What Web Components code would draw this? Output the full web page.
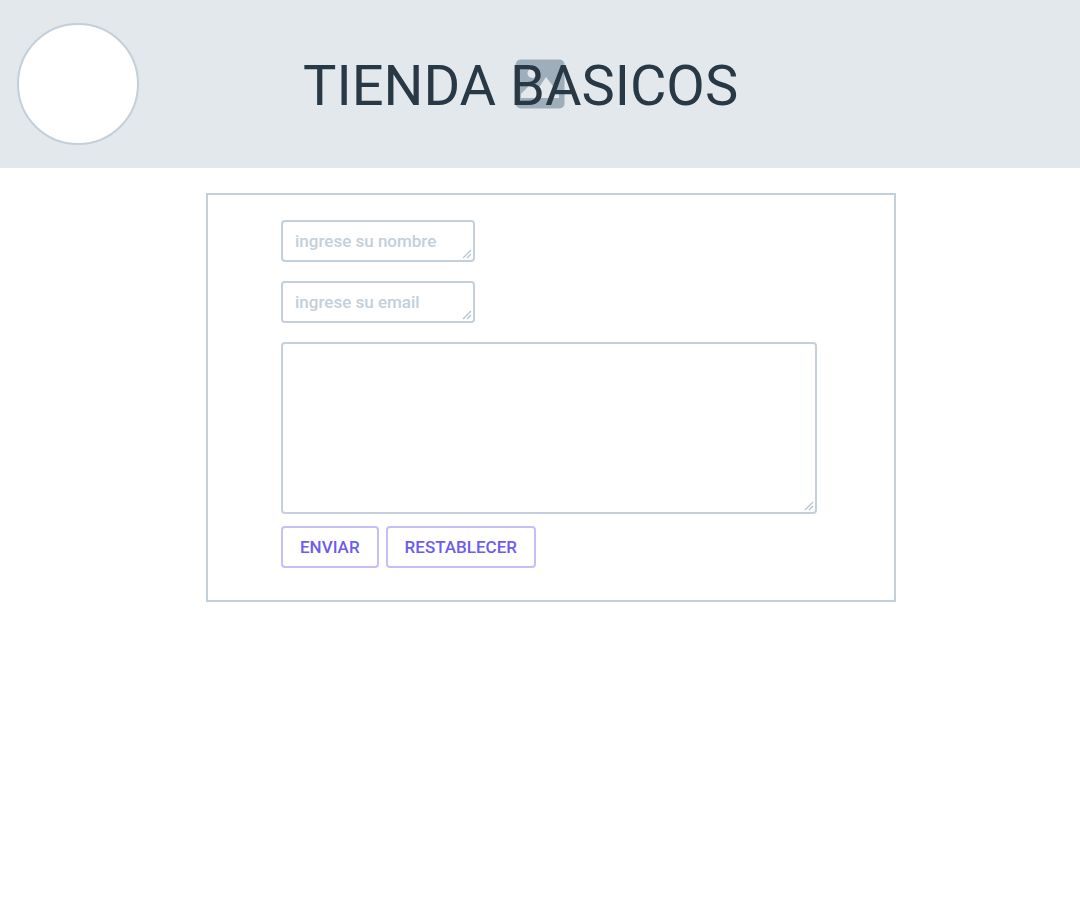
<!DOCTYPE html>
<html lang="es">
<head>
<meta charset="utf-8">
<meta name="viewport" content="width=device-width, initial-scale=1">
<title>Tienda Basicos</title>
<style>
  body {
    --line: #c3cfd9;
    --ink: #293845;
    --accent: #6c5cf0;
    --accent-line: #c4befa;
    margin: 0;
    background: #fff;
    color: var(--ink);
    font-family: Roboto, "Liberation Sans", sans-serif;
  }
</style>
</head>
<body>
<store-header>Tienda Basicos</store-header>
<contact-panel>
  <text-field name="nombre" placeholder="ingrese su nombre"></text-field>
  <text-field name="email" placeholder="ingrese su email"></text-field>
  <text-field name="mensaje" label="mensaje" multiline></text-field>
  <action-button slot="actions">Enviar</action-button>
  <action-button slot="actions">Restablecer</action-button>
</contact-panel>
<script>
  class StoreHeader extends HTMLElement {
    constructor() {
      super();
      this.attachShadow({ mode: 'open' }).innerHTML = `
        <style>
          :host { display: block; }
          header {
            position: relative;
            display: flex;
            align-items: center;
            gap: 164px;
            min-height: 168px;
            padding: 0 17px;
            box-sizing: border-box;
            background: #e2e8ec;
          }
          .logo {
            flex: none;
            width: 122px;
            height: 122px;
            box-sizing: border-box;
            border: 2px solid var(--line);
            border-radius: 50%;
            background: #fff;
          }
          .picture {
            position: absolute;
            inset: 0;
            margin: auto;
            width: 50px;
            height: 50px;
          }
          h1 {
            position: relative;
            margin: 0;
            padding-top: 4px;
            font-size: 56px;
            line-height: 66px;
            font-weight: 400;
            text-transform: uppercase;
            white-space: nowrap;
          }
        </style>
        <header>
          <div class="logo"></div>
          <svg class="picture" viewBox="0 0 50 50" aria-hidden="true">
            <rect x="0.7" y="0.5" width="48.8" height="49" rx="5" fill="#9eaebb"/>
            <circle cx="17.3" cy="14.2" r="4.8" fill="#e2e8ec"/>
            <path d="M6 39V35L15.5 25 21.5 32 31 18 44 35V39Z" fill="#e2e8ec"/>
          </svg>
          <h1><slot></slot></h1>
        </header>`;
    }
  }

  class ContactPanel extends HTMLElement {
    constructor() {
      super();
      this.attachShadow({ mode: 'open' }).innerHTML = `
        <style>
          :host {
            display: grid;
            grid-template-columns: 206fr 690fr 184fr;
            padding: 25px 0;
          }
          form {
            grid-column: 2;
            display: flex;
            flex-direction: column;
            gap: 12px;
            padding: 25px 77px 32px 73px;
            border: 2px solid var(--line);
          }
          .fields { display: flex; flex-direction: column; gap: 19px; }
          .actions { display: flex; flex-wrap: wrap; gap: 7px; }
        </style>
        <form>
          <div class="fields"><slot></slot></div>
          <div class="actions"><slot name="actions"></slot></div>
        </form>`;
    }
  }

  class TextField extends HTMLElement {
    constructor() {
      super();
      this.attachShadow({ mode: 'open' }).innerHTML = `
        <style>
          :host { display: block; position: relative; width: 194px; }
          :host([multiline]) { width: auto; }
          input, textarea {
            display: block;
            width: 100%;
            height: 42px;
            box-sizing: border-box;
            margin: 0;
            padding: 0 12px;
            border: 2px solid var(--line);
            border-radius: 4px;
            background: #fff;
            color: var(--ink);
            font: 500 17px/24px Roboto, "Liberation Sans", sans-serif;
            resize: none;
          }
          textarea { height: 172px; padding: 8px 12px; }
          ::placeholder { color: var(--line); opacity: 1; }
          svg {
            position: absolute;
            right: 3px;
            bottom: 3px;
            width: 10px;
            height: 10px;
            pointer-events: none;
          }
        </style>
        <svg viewBox="0 0 10 10" fill="none" stroke="#b4c2cd" stroke-width="1.2" aria-hidden="true">
          <path d="M1 9 9 1M5 9 9 5"/>
        </svg>`;
    }
    connectedCallback() {
      if (this.control) return;
      this.control = document.createElement(this.hasAttribute('multiline') ? 'textarea' : 'input');
      this.control.name = this.getAttribute('name');
      this.control.placeholder = this.getAttribute('placeholder') || '';
      this.control.setAttribute('aria-label', this.getAttribute('label') || this.control.placeholder);
      this.shadowRoot.insertBefore(this.control, this.shadowRoot.querySelector('svg'));
    }
  }

  class ActionButton extends HTMLElement {
    constructor() {
      super();
      this.attachShadow({ mode: 'open' }).innerHTML = `
        <style>
          :host { display: block; }
          button {
            display: block;
            height: 42px;
            margin: 0;
            padding: 0 17px;
            border: 2px solid var(--accent-line);
            border-radius: 4px;
            background: #fff;
            color: var(--accent);
            font: 500 17px/24px Roboto, "Liberation Sans", sans-serif;
            text-transform: uppercase;
            cursor: pointer;
          }
        </style>
        <button type="button"><slot></slot></button>`;
    }
  }

  customElements.define('store-header', StoreHeader);
  customElements.define('contact-panel', ContactPanel);
  customElements.define('text-field', TextField);
  customElements.define('action-button', ActionButton);
</script>
</body>
</html>
